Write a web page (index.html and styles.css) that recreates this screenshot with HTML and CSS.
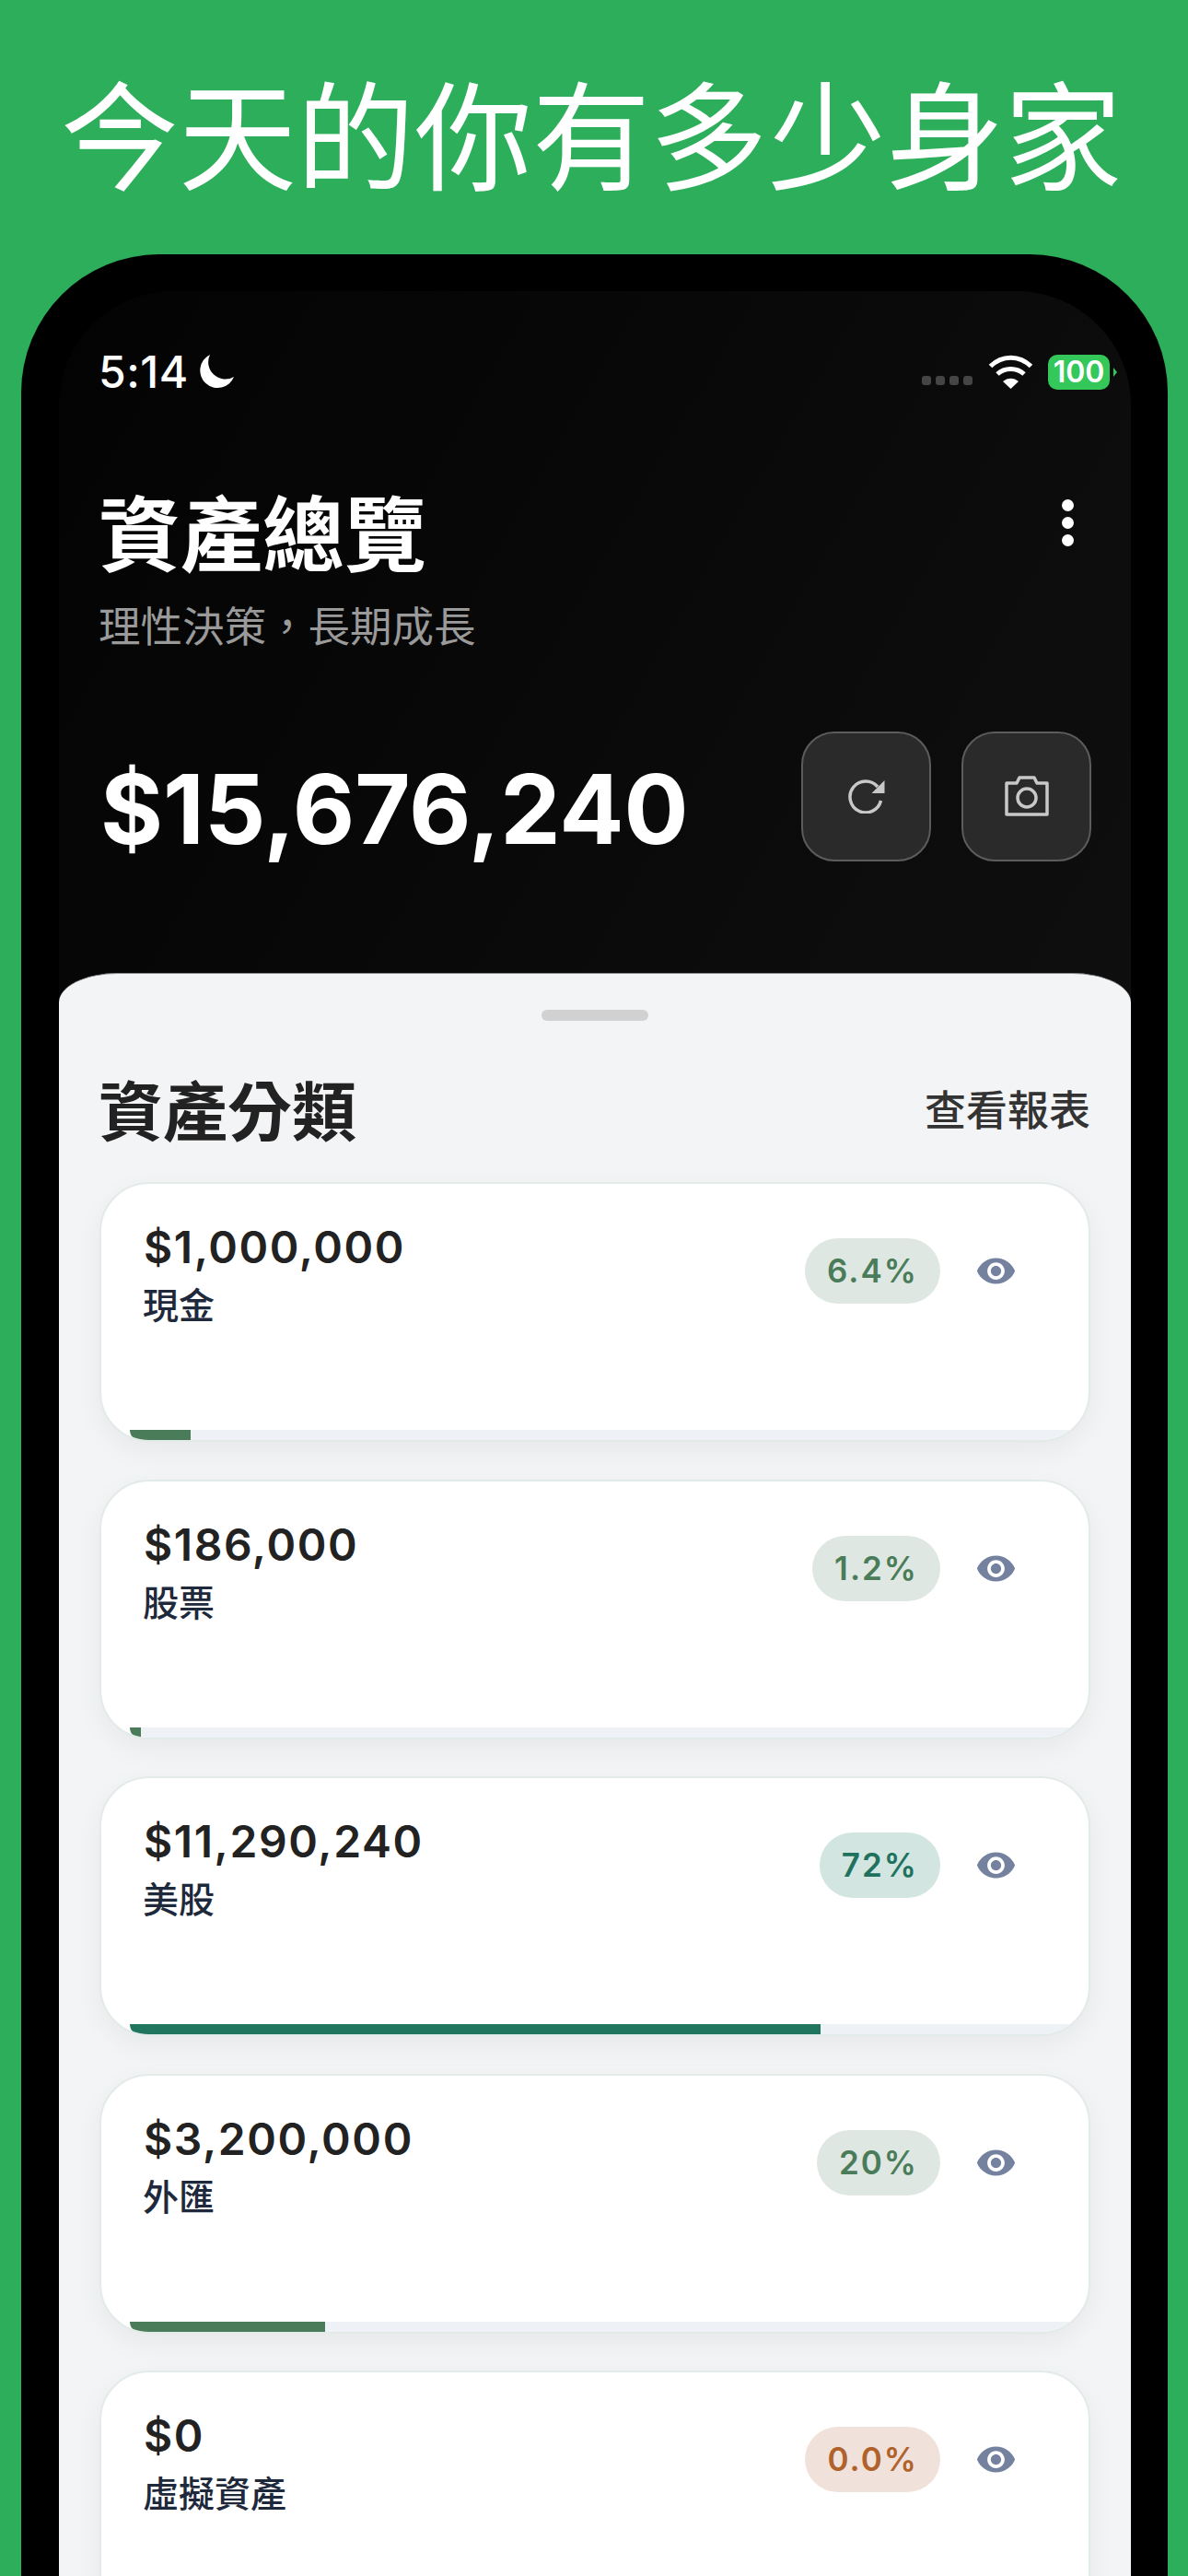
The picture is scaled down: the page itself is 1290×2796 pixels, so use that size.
FILE: index.html
```html
<!DOCTYPE html>
<html lang="zh-Hant">
<head>
    <meta charset="UTF-8">
    <meta name="viewport" content="width=device-width, initial-scale=1.0">
    <title>今天的你有多少身家</title>
    <link rel="stylesheet" href="styles.css">
</head>
<body>
    <h1 class="headline">今天的你有多少身家</h1>
    <div class="phone">
        <div class="screen">
            <div class="status-bar">
                <div class="status-left">
                    <span class="clock">5:14</span>
                    <svg class="moon" viewBox="0 0 38 38"><path d="M12 1A19 19 0 1 0 38 25 A18.5 18.5 0 0 1 12 1Z" fill="#fff"/></svg>
                </div>
                <div class="status-right">
                    <div class="signal"><i></i><i></i><i></i><i></i></div>
                    <svg class="wifi" viewBox="0 0 49 37">
                        <path d="M2.5 12.5C15 0 34 0 46.500 12.500" fill="none" stroke="#fff" stroke-width="5"/>
                        <path d="M10 21C18 13.500 31 13.500 39 21" fill="none" stroke="#fff" stroke-width="5"/>
                        <path d="M16 29C21 24.500 28 24.500 33 29L24.500 37Z" fill="#fff"/>
                    </svg>
                    <div class="battery">100</div>
                </div>
            </div>

            <div class="summary">
                <div class="summary-title">
                    <div>
                        <h2>資產總覽</h2>
                        <p>理性決策，長期成長</p>
                    </div>
                    <div class="more"><i></i><i></i><i></i></div>
                </div>
                <div class="total-row">
                    <div class="total">$15,676,240</div>
                    <div class="actions">
                        <button class="action">
                            <svg width="41" height="38" viewBox="0 0 41 38"><path d="M33 9A17 17 0 1 0 36.500 24" fill="none" stroke="#c8c8c8" stroke-width="3.500"/><path d="M40.500 2V16H26.500Z" fill="#c8c8c8"/></svg>
                        </button>
                        <button class="action">
                            <svg width="50" height="46" viewBox="0 0 50 46"><path d="M3 9H14L17 3H33L36 9H47V43H3Z" fill="none" stroke="#c8c8c8" stroke-width="3.500" stroke-linejoin="round"/><circle cx="25" cy="25" r="10" fill="none" stroke="#c8c8c8" stroke-width="3.500"/></svg>
                        </button>
                    </div>
                </div>
            </div>

            <div class="sheet">
                <div class="handle"></div>
                <div class="sheet-head">
                    <h3>資產分類</h3>
                    <span>查看報表</span>
                </div>

                <div class="card">
                    <div class="card-body">
                        <div>
                            <div class="amount">$1,000,000</div>
                            <div class="name">現金</div>
                        </div>
                        <div class="card-side">
                            <span class="pill">6.4%</span>
                            <svg class="eye" viewBox="0 0 24 24"><path d="M12 4.500C7 4.500 2.730 7.610 1 12c1.730 4.390 6 7.500 11 7.500s9.270-3.110 11-7.500c-1.730-4.390-6-7.500-11-7.500zM12 17c-2.760 0-5-2.240-5-5s2.240-5 5-5 5 2.240 5 5-2.240 5-5 5zm0-8c-1.660 0-3 1.340-3 3s1.340 3 3 3 3-1.340 3-3-1.340-3-3-3z"/></svg>
                        </div>
                    </div>
                    <div class="track"><div class="bar" style="width: 6.38%"></div></div>
                </div>

                <div class="card">
                    <div class="card-body">
                        <div>
                            <div class="amount">$186,000</div>
                            <div class="name">股票</div>
                        </div>
                        <div class="card-side">
                            <span class="pill">1.2%</span>
                            <svg class="eye" viewBox="0 0 24 24"><path d="M12 4.500C7 4.500 2.730 7.610 1 12c1.730 4.390 6 7.500 11 7.500s9.270-3.110 11-7.500c-1.730-4.390-6-7.500-11-7.500zM12 17c-2.760 0-5-2.240-5-5s2.240-5 5-5 5 2.240 5 5-2.240 5-5 5zm0-8c-1.660 0-3 1.340-3 3s1.340 3 3 3 3-1.340 3-3-1.340-3-3-3z"/></svg>
                        </div>
                    </div>
                    <div class="track"><div class="bar" style="width: 1.19%"></div></div>
                </div>

                <div class="card">
                    <div class="card-body">
                        <div>
                            <div class="amount">$11,290,240</div>
                            <div class="name">美股</div>
                        </div>
                        <div class="card-side">
                            <span class="pill pill-teal">72%</span>
                            <svg class="eye" viewBox="0 0 24 24"><path d="M12 4.500C7 4.500 2.730 7.610 1 12c1.730 4.390 6 7.500 11 7.500s9.270-3.110 11-7.500c-1.730-4.390-6-7.500-11-7.500zM12 17c-2.760 0-5-2.240-5-5s2.240-5 5-5 5 2.240 5 5-2.240 5-5 5zm0-8c-1.660 0-3 1.340-3 3s1.340 3 3 3 3-1.340 3-3-1.340-3-3-3z"/></svg>
                        </div>
                    </div>
                    <div class="track"><div class="bar bar-teal" style="width: 72.02%"></div></div>
                </div>

                <div class="card">
                    <div class="card-body">
                        <div>
                            <div class="amount">$3,200,000</div>
                            <div class="name">外匯</div>
                        </div>
                        <div class="card-side">
                            <span class="pill">20%</span>
                            <svg class="eye" viewBox="0 0 24 24"><path d="M12 4.500C7 4.500 2.730 7.610 1 12c1.730 4.390 6 7.500 11 7.500s9.270-3.110 11-7.500c-1.730-4.390-6-7.500-11-7.500zM12 17c-2.760 0-5-2.240-5-5s2.240-5 5-5 5 2.240 5 5-2.240 5-5 5zm0-8c-1.660 0-3 1.340-3 3s1.340 3 3 3 3-1.340 3-3-1.340-3-3-3z"/></svg>
                        </div>
                    </div>
                    <div class="track"><div class="bar" style="width: 20.41%"></div></div>
                </div>

                <div class="card">
                    <div class="card-body">
                        <div>
                            <div class="amount">$0</div>
                            <div class="name">虛擬資產</div>
                        </div>
                        <div class="card-side">
                            <span class="pill pill-orange">0.0%</span>
                            <svg class="eye" viewBox="0 0 24 24"><path d="M12 4.500C7 4.500 2.730 7.610 1 12c1.730 4.390 6 7.500 11 7.500s9.270-3.110 11-7.500c-1.730-4.390-6-7.500-11-7.500zM12 17c-2.760 0-5-2.240-5-5s2.240-5 5-5 5 2.240 5 5-2.240 5-5 5zm0-8c-1.660 0-3 1.340-3 3s1.340 3 3 3 3-1.340 3-3-1.340-3-3-3z"/></svg>
                        </div>
                    </div>
                    <div class="track"><div class="bar" style="width: 0%"></div></div>
                </div>
            </div>
        </div>
    </div>
</body>
</html>
```

FILE: styles.css
```css
* { box-sizing: border-box; }
html, body { margin: 0; padding: 0; }
body { width: 1290px; height: 2796px; overflow: hidden; display: flex; flex-direction: column; background-color: #2cae5a; font-family: Inter, "Noto Sans CJK TC", sans-serif; }
h1, h2, h3, p { margin: 0; }

.headline { height: 276px; padding-top: 60px; padding-right: 6px; text-align: center; color: #fff; font-size: 128px; line-height: 182px; font-weight: 400; white-space: nowrap; }

.phone { flex: 1; min-height: 0; margin: 0 22px 0 23px; padding: 40px 40px 0 41px; background-color: #000; border-radius: 150px 150px 0 0; }
.screen { height: 100%; overflow: hidden; display: flex; flex-direction: column; background: linear-gradient(120deg, #030303 0%, #161616 100%); border-radius: 124px 124px 0 0; }

.status-bar { height: 112px; padding: 66px 23px 0 43px; display: flex; justify-content: space-between; align-items: flex-start; color: #fff; }
.status-left { display: flex; align-items: center; gap: 11px; height: 42px; }
.clock { font-size: 48px; line-height: 42px; font-weight: 500; letter-spacing: 0.500px; margin-top: 2px; }
.moon { width: 38px; height: 38px; }
.status-right { display: flex; align-items: flex-start; }
.signal { display: flex; gap: 5px; margin-top: 26px; margin-right: 17px; }
.signal i { width: 10px; height: 10px; border-radius: 3px; background-color: #454545; }
.wifi { width: 49px; height: 37px; margin-top: 3px; margin-right: 16px; }
.battery { position: relative; width: 67px; height: 38px; margin-top: 3px; border-radius: 10px; background-color: #34c759; color: #fff; font-size: 32px; line-height: 38px; font-weight: 600; text-align: center; }
.battery::after { content: ""; position: absolute; left: 71px; top: 14px; border-left: 4px solid #34c759; border-top: 5px solid transparent; border-bottom: 5px solid transparent; }

.summary { padding: 0 43px; height: 628px; }
.summary-title { display: flex; justify-content: space-between; align-items: flex-start; padding-top: 91px; }
.summary-title h2 { color: #fff; font-size: 89px; line-height: 123px; font-weight: 700; }
.summary-title p { color: #9a9a9a; font-size: 45.500px; line-height: 66px; font-weight: 400; margin-top: 6px; }
.more { display: flex; flex-direction: column; gap: 6px; margin-top: 23px; margin-right: 19px; }
.more i { width: 13px; height: 13px; border-radius: 50%; background-color: #fff; }

.total-row { display: flex; justify-content: space-between; align-items: flex-start; margin-top: 80px; }
.total { color: #fff; font-size: 104px; line-height: 141px; font-weight: 700; margin-left: 2px; margin-top: 14px; }
.actions { display: flex; gap: 33px; }
.action { width: 141px; height: 141px; padding: 0 0 2px; display: flex; align-items: center; justify-content: center; background-color: #2a2a2a; border: 2px solid #5c5c5c; border-radius: 36px; }

.sheet { flex: 1; min-height: 0; padding: 39px 44px 0; background-color: #f3f4f6; border-top: 1px solid #8a8a8a; border-radius: 64px 64px 0 0 / 32px 32px 0 0; }
.handle { width: 116px; height: 12px; margin: 0 auto; border-radius: 6px; background-color: #d1d1d1; }
.sheet-head { display: flex; justify-content: space-between; align-items: center; height: 96px; margin-top: 46px; margin-bottom: 33px; }
.sheet-head h3 { color: #222; font-size: 70px; font-weight: 600; margin-left: -1px; }
.sheet-head span { color: #333; font-size: 45px; font-weight: 500; }

.card { height: 282px; margin-bottom: 40.500px; overflow: hidden; display: flex; flex-direction: column; background-color: #fff; border: 2px solid #e3ebe8; border-radius: 54px; box-shadow: 0 10px 30px rgba(0, 0, 0, 0.05); }
.card-body { flex: 1; padding: 37px 78px 0 46px; display: flex; justify-content: space-between; align-items: flex-start; }
.amount { color: #222; font-size: 48px; line-height: 64px; font-weight: 600; letter-spacing: 1.600px; }
.name { color: #1e293b; font-size: 39px; line-height: 56px; font-weight: 500; margin-left: -1px; margin-top: 3px; }
.card-side { display: flex; align-items: center; gap: 38px; margin-top: 22px; }
.pill { height: 71px; padding: 0 24px; border-radius: 36px; background-color: #dfe7e2; color: #4a7c59; font-size: 35px; line-height: 71px; font-weight: 600; letter-spacing: 2px; }
.pill-teal { background-color: #d2e5e0; color: #20725f; }
.pill-orange { background-color: #f0e2da; color: #b0622d; }
.eye { width: 45px; height: 45px; fill: #7482a0; }
.track { height: 12px; margin-left: 31px; margin-bottom: -1px; overflow: hidden; background-color: #eef1f6; border-radius: 0 0 0 14px; }
.bar { height: 100%; background-color: #4a7c59; }
.bar-teal { background-color: #20755f; }
```
